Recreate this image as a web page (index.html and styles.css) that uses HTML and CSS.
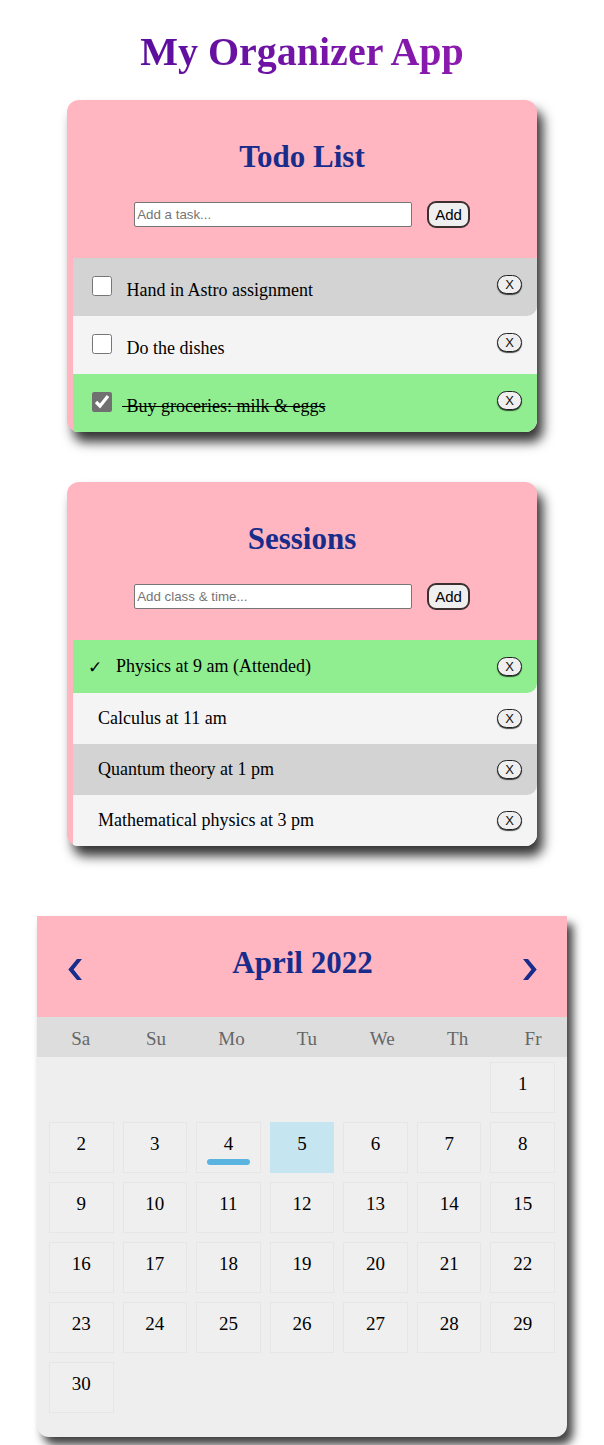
FILE: index.html
```html
<!DOCTYPE html>
<html lang="en">
<head>
<meta charset="UTF-8">
<meta name="viewport" content="width=device-width, initial-scale=1.0">
<title>My Organizer App</title>

<link rel="stylesheet" href="styles.css">

</head>
<body>
    <div class="page">
        <h1 class="app-title">My Organizer App</h1>

        <div class="card">
            <div class="card-head">
                <h2>Todo List</h2>
                <div class="add-row">
                    <input type="text" placeholder="Add a task...">
                    <button class="add-button">Add</button>
                </div>
            </div>
            <ul class="list">
                <li class="todo-item tone-gray rounded">
                    <input type="checkbox">
                    <span class="item-text">&nbsp;Hand in Astro assignment</span>
                    <button class="remove-button">X</button>
                </li>
                <li class="todo-item tone-light">
                    <input type="checkbox">
                    <span class="item-text">&nbsp;Do the dishes</span>
                    <button class="remove-button">X</button>
                </li>
                <li class="todo-item tone-green">
                    <input type="checkbox" checked>
                    <span class="item-text done">&nbsp;Buy groceries: milk &amp; eggs</span>
                    <button class="remove-button">X</button>
                </li>
            </ul>
        </div>

        <div class="card sessions">
            <div class="card-head">
                <h2>Sessions</h2>
                <div class="add-row">
                    <input type="text" placeholder="Add class &amp; time...">
                    <button class="add-button">Add</button>
                </div>
            </div>
            <ul class="list">
                <li class="session-item attended tone-green rounded">
                    <span class="tick">✓</span>
                    <span class="item-text">Physics at 9 am (Attended)</span>
                    <button class="remove-button">X</button>
                </li>
                <li class="session-item tone-light">
                    <span class="item-text">Calculus at 11 am</span>
                    <button class="remove-button">X</button>
                </li>
                <li class="session-item tone-gray rounded">
                    <span class="item-text">Quantum theory at 1 pm</span>
                    <button class="remove-button">X</button>
                </li>
                <li class="session-item tone-light">
                    <span class="item-text">Mathematical physics at 3 pm</span>
                    <button class="remove-button">X</button>
                </li>
            </ul>
        </div>

        <div class="calendar">
            <div class="month">
                <span class="nav prev">
                    <svg width="14" height="21" viewBox="0 0 14 21"><path d="M9 0 L14 0 L5.6 10.5 L14 21 L9 21 L0.3 10.5 Z" fill="#182d8b"/></svg>
                </span>
                <h2>April 2022</h2>
                <span class="nav next">
                    <svg width="14" height="21" viewBox="0 0 14 21"><path d="M5 0 L0 0 L8.4 10.5 L0 21 L5 21 L13.7 10.5 Z" fill="#182d8b"/></svg>
                </span>
            </div>
            <ul class="weekdays">
                <li>Sa</li><li>Su</li><li>Mo</li><li>Tu</li><li>We</li><li>Th</li><li>Fr</li>
            </ul>
            <ul class="days">
                <li class="first">1</li>
                <li>2</li><li>3</li><li class="today">4<span class="today-bar"></span></li><li class="active">5</li><li>6</li><li>7</li><li>8</li>
                <li>9</li><li>10</li><li>11</li><li>12</li><li>13</li><li>14</li><li>15</li>
                <li>16</li><li>17</li><li>18</li><li>19</li><li>20</li><li>21</li><li>22</li>
                <li>23</li><li>24</li><li>25</li><li>26</li><li>27</li><li>28</li><li>29</li>
                <li>30</li>
            </ul>
        </div>
    </div>
</body>
</html>
```

FILE: styles.css
```css
body {
    margin: 0;
    font-family: "Liberation Serif", "Times New Roman", serif;
    background-color: #fff;
    color: #000;
}

.page {
    display: flex;
    flex-direction: column;
    align-items: center;
    padding: 28px 0 8px;
}

.app-title {
    margin: 0 0 25px;
    font-size: 40px;
    font-weight: bold;
    background: linear-gradient(to right, #5a0e9e, #8d1aae);
    -webkit-background-clip: text;
    background-clip: text;
    color: transparent;
}

/* todo + sessions cards */
.card {
    width: 470px;
    background-color: #ffb6c1;
    border-radius: 12px;
    overflow: hidden;
    box-shadow: 6px 10px 12px rgba(0, 0, 0, 0.8);
}

.sessions {
    margin-top: 50px;
}

.card-head {
    padding: 40px 0 30px;
    text-align: center;
}

.card-head h2,
.month h2 {
    margin: 0;
    font-size: 31px;
    line-height: 34px;
    color: #182d8b;
}

.add-row {
    display: flex;
    justify-content: center;
    align-items: center;
    gap: 15px;
    margin-top: 27px;
    height: 27px;
}

.add-row input {
    width: 278px;
    height: 25px;
    box-sizing: border-box;
    margin: 0;
    padding: 1px 2px;
    font-family: "Liberation Sans", Arial, sans-serif;
    font-size: 13.33px;
    border: 1px solid #767676;
    border-radius: 2px;
}

.add-row input::placeholder {
    color: #757575;
}

.add-button {
    height: 27px;
    margin: 0;
    padding: 0 6px;
    font-family: "Liberation Sans", Arial, sans-serif;
    font-size: 15px;
    background-color: #efefef;
    border: 2px solid #3b2f30;
    border-radius: 9px;
    color: #000;
}

.list {
    list-style: none;
    margin: 0 0 0 6px;
    padding: 0;
    background-color: #f4f4f4;
}

.list li {
    display: flex;
    align-items: center;
    box-sizing: border-box;
    padding-right: 15px;
}

.tone-gray { background-color: #d3d3d3; }
.tone-light { background-color: #f4f4f4; }
.tone-green { background-color: #90ee90; }

.rounded {
    border-bottom-right-radius: 10px;
}

.item-text {
    flex: 1;
    font-size: 18px;
}

.todo-item {
    height: 58px;
    padding-left: 19px;
}

.todo-item input[type="checkbox"] {
    width: 20px;
    height: 20px;
    margin: 0 10px 2px 0;
    accent-color: #707070;
}

.todo-item .item-text {
    margin-top: 7px;
}

.todo-item .remove-button {
    margin-bottom: 6px;
}

.done {
    text-decoration: line-through;
}

.session-item {
    height: 51px;
    padding-left: 25px;
}

.session-item.attended {
    height: 53px;
    padding-left: 15px;
}

.tick {
    width: 28px;
    flex: none;
    font-family: "DejaVu Sans", sans-serif;
    font-size: 17px;
    line-height: 20px;
}

.remove-button {
    width: 25px;
    height: 19px;
    padding: 0;
    font-family: "Liberation Sans", Arial, sans-serif;
    font-size: 13px;
    line-height: 15px;
    background-color: #efefef;
    border: 1px solid #222;
    border-radius: 10px;
    box-shadow: 0 1px 1px rgba(0, 0, 0, 0.7);
    color: #111;
}

/* calendar */
.calendar {
    width: 530px;
    margin-top: 70px;
    background-color: #eee;
    border-radius: 0 0 12px 12px;
    overflow: hidden;
    box-shadow: 6px 8px 10px rgba(0, 0, 0, 0.75);
}

.month {
    display: flex;
    justify-content: space-between;
    align-items: flex-start;
    height: 101px;
    box-sizing: border-box;
    padding: 30px 30px 0 31px;
    background-color: #ffb6c1;
}

.nav {
    display: block;
    margin-top: 13px;
}

.nav svg {
    display: block;
}

.weekdays {
    list-style: none;
    margin: 0;
    height: 40px;
    box-sizing: border-box;
    padding: 3px 0 0 6px;
    display: grid;
    grid-template-columns: repeat(7, 75.4px);
    align-items: center;
    background-color: #ddd;
}

.weekdays li {
    text-align: center;
    font-size: 19px;
    color: #666;
}

.days {
    list-style: none;
    margin: 0;
    padding: 5px 12px 24px;
    display: grid;
    grid-template-columns: repeat(7, 1fr);
    grid-auto-rows: 51px;
    gap: 9px;
}

.days li {
    box-sizing: border-box;
    padding-top: 10px;
    text-align: center;
    font-size: 19px;
    background-color: #efefef;
    border: 1px solid #e6e6e6;
}

.days .first {
    grid-column-start: 7;
}

.days .active {
    background-color: #c5e6f1;
    border-color: #c5e6f1;
}

.today-bar {
    display: block;
    width: 43px;
    height: 6px;
    margin: 4px auto 0;
    border-radius: 3px;
    background-color: #5ab4df;
}
```
